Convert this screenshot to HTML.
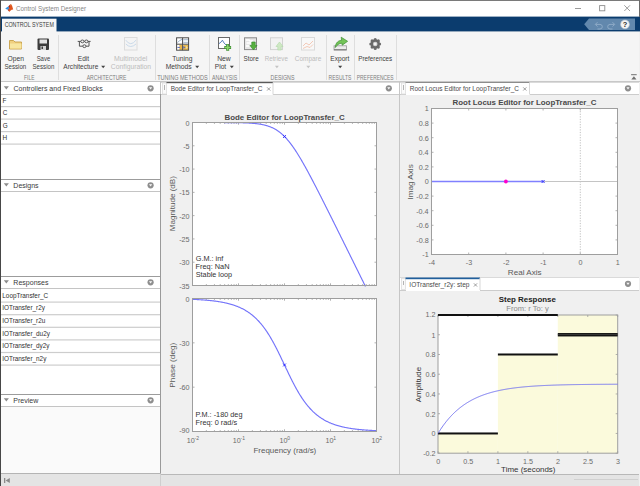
<!DOCTYPE html><html><head><meta charset="utf-8"><style>*{margin:0;padding:0}html,body{width:640px;height:486px;overflow:hidden;background:#f0f0f0}svg{position:absolute;left:0;top:0;display:block}</style></head><body><svg width="640" height="486" viewBox="0 0 640 486" style="font-family:'Liberation Sans', sans-serif"><rect x="0" y="0" width="640" height="486" fill="#f0f0f0" shape-rendering="crispEdges"/>
<rect x="0" y="0" width="640" height="17" fill="#ffffff" shape-rendering="crispEdges"/>
<rect x="0" y="0" width="640" height="1" fill="#7a7a7a" shape-rendering="crispEdges"/>
<rect x="0" y="16.6" width="640" height="14.8" fill="#0b3c6e"/>
<rect x="2" y="18.7" width="54.5" height="14" fill="#f5f5f5"/>
<text x="15.93" y="10.90" font-size="8.1" fill="#868686" textLength="70.06" lengthAdjust="spacingAndGlyphs">Control System Designer</text>
<text x="4.63" y="26.65" font-size="6.5" fill="#3c3c3c" textLength="49.20" lengthAdjust="spacingAndGlyphs">CONTROL SYSTEM</text>
<polygon points="584.2,24.3 589,18.6 635,18.6 635,29.9 589,29.9" fill="#6288ad"/>
<path d="M597.5,22.2 l-2.2,2.2 l2.2,2.2 M595.5,24.4 h4.5 a2.3,2.3 0 0 1 0,4.6 h-2.5" stroke="#8eabc8" stroke-width="1" fill="none"/>
<path d="M612.5,22.2 l2.2,2.2 l-2.2,2.2 M614.5,24.4 h-4.5 a2.3,2.3 0 0 0 0,4.6 h2.5" stroke="#8eabc8" stroke-width="1" fill="none"/>
<circle cx="625" cy="24.4" r="4.4" fill="#f4f4f4" stroke="#b8c4d0" stroke-width="0.6"/>
<text x="625" y="27.3" font-size="7.4" font-weight="bold" text-anchor="middle" fill="#2a2a2a">?</text>
<line x1="575" y1="8.5" x2="581" y2="8.5" stroke="#8e8e8e" stroke-width="0.9"/>
<rect x="599.6" y="5.6" width="5.2" height="5.2" fill="none" stroke="#8e8e8e" stroke-width="0.9"/>
<path d="M624.3,5.3 L630,11 M630,5.3 L624.3,11" stroke="#8e8e8e" stroke-width="0.85"/>
<polygon points="5.2,8.6 8.2,6.6 9.6,8.2 7.4,9.8" fill="#3590e0"/>
<polygon points="8.2,6.6 10.6,4.0 9.4,11.6 7.6,10.0 9.6,8.2" fill="#a8281a"/>
<polygon points="10.6,4.0 12,5.6 13.2,9.6 11.6,9.8 9.2,11.8 8.6,11" fill="#e0541c"/>
<polygon points="10.6,4.0 11.6,4.4 12,5.6" fill="#e8b040"/>
<rect x="1" y="32" width="638" height="49" fill="#f5f5f5" shape-rendering="crispEdges"/>
<rect x="0" y="81" width="640" height="1" fill="#c8c8c8" shape-rendering="crispEdges"/>
<rect x="58" y="35" width="1" height="45" fill="#dedede" shape-rendering="crispEdges"/>
<rect x="155" y="35" width="1" height="45" fill="#dedede" shape-rendering="crispEdges"/>
<rect x="209" y="35" width="1" height="45" fill="#dedede" shape-rendering="crispEdges"/>
<rect x="239" y="35" width="1" height="45" fill="#dedede" shape-rendering="crispEdges"/>
<rect x="326" y="35" width="1" height="45" fill="#dedede" shape-rendering="crispEdges"/>
<rect x="354" y="35" width="1" height="45" fill="#dedede" shape-rendering="crispEdges"/>
<rect x="396" y="35" width="1" height="45" fill="#dedede" shape-rendering="crispEdges"/>
<text x="7.45" y="60.80" font-size="7.3" fill="#3f3f3f" textLength="16.50" lengthAdjust="spacingAndGlyphs">Open</text>
<text x="4.42" y="69.40" font-size="7.3" fill="#3f3f3f" textLength="21.79" lengthAdjust="spacingAndGlyphs">Session</text>
<text x="36.63" y="60.80" font-size="7.3" fill="#3f3f3f" textLength="13.63" lengthAdjust="spacingAndGlyphs">Save</text>
<text x="32.52" y="69.40" font-size="7.3" fill="#3f3f3f" textLength="21.79" lengthAdjust="spacingAndGlyphs">Session</text>
<text x="24.11" y="79.60" font-size="6.5" fill="#7c7c7c" textLength="10.29" lengthAdjust="spacingAndGlyphs">FILE</text>
<text x="77.78" y="60.80" font-size="7.3" fill="#3f3f3f" textLength="11.28" lengthAdjust="spacingAndGlyphs">Edit</text>
<text x="63.30" y="69.40" font-size="7.3" fill="#3f3f3f" textLength="35.00" lengthAdjust="spacingAndGlyphs">Architecture</text>
<text x="113.95" y="60.80" font-size="7.3" fill="#bcbcbc" textLength="33.40" lengthAdjust="spacingAndGlyphs">Multimodel</text>
<text x="110.86" y="69.40" font-size="7.3" fill="#bcbcbc" textLength="40.20" lengthAdjust="spacingAndGlyphs">Configuration</text>
<text x="86.70" y="79.60" font-size="6.5" fill="#7c7c7c" textLength="39.72" lengthAdjust="spacingAndGlyphs">ARCHITECTURE</text>
<text x="172.17" y="60.80" font-size="7.3" fill="#3f3f3f" textLength="20.27" lengthAdjust="spacingAndGlyphs">Tuning</text>
<text x="165.66" y="69.40" font-size="7.3" fill="#3f3f3f" textLength="26.09" lengthAdjust="spacingAndGlyphs">Methods</text>
<text x="157.19" y="79.60" font-size="6.5" fill="#7c7c7c" textLength="50.57" lengthAdjust="spacingAndGlyphs">TUNING METHODS</text>
<text x="217.16" y="60.80" font-size="7.3" fill="#3f3f3f" textLength="13.61" lengthAdjust="spacingAndGlyphs">New</text>
<text x="214.77" y="69.40" font-size="7.3" fill="#3f3f3f" textLength="11.38" lengthAdjust="spacingAndGlyphs">Plot</text>
<text x="212.00" y="79.60" font-size="6.5" fill="#7c7c7c" textLength="25.15" lengthAdjust="spacingAndGlyphs">ANALYSIS</text>
<text x="243.62" y="60.80" font-size="7.3" fill="#3f3f3f" textLength="15.07" lengthAdjust="spacingAndGlyphs">Store</text>
<text x="264.70" y="60.80" font-size="7.3" fill="#bcbcbc" textLength="23.17" lengthAdjust="spacingAndGlyphs">Retrieve</text>
<text x="294.78" y="60.80" font-size="7.3" fill="#bcbcbc" textLength="26.53" lengthAdjust="spacingAndGlyphs">Compare</text>
<text x="270.58" y="79.60" font-size="6.5" fill="#7c7c7c" textLength="23.87" lengthAdjust="spacingAndGlyphs">DESIGNS</text>
<text x="330.37" y="60.80" font-size="7.3" fill="#3f3f3f" textLength="18.99" lengthAdjust="spacingAndGlyphs">Export</text>
<text x="328.60" y="79.60" font-size="6.5" fill="#7c7c7c" textLength="22.74" lengthAdjust="spacingAndGlyphs">RESULTS</text>
<text x="358.30" y="60.80" font-size="7.3" fill="#3f3f3f" textLength="33.94" lengthAdjust="spacingAndGlyphs">Preferences</text>
<text x="356.81" y="79.60" font-size="6.5" fill="#7c7c7c" textLength="36.82" lengthAdjust="spacingAndGlyphs">PREFERENCES</text>
<polygon points="101.2,65.8 105.2,65.8 103.2,68.3" fill="#444"/>
<polygon points="195.2,65.8 199.2,65.8 197.2,68.3" fill="#444"/>
<polygon points="229.8,65.8 233.8,65.8 231.8,68.3" fill="#444"/>
<polygon points="274.9,65.8 278.9,65.8 276.9,68.3" fill="#c4c4c4"/>
<polygon points="306.3,65.8 310.3,65.8 308.3,68.3" fill="#c4c4c4"/>
<polygon points="338.2,65.8 342.2,65.8 340.2,68.3" fill="#444"/>
<g><path d="M9.5,40.5 h4 l1.5,1.5 h6.5 v7 h-12 z" fill="#f0d080" stroke="#c8a048" stroke-width="0.9"/><path d="M10,43.5 h11.5 v5 h-11.5 z" fill="#f8e6a0"/><rect x="37.5" y="38.5" width="11.5" height="11.5" rx="1" fill="#3c3c3c"/><rect x="39.5" y="39.5" width="7.5" height="4" fill="#e4e4e4"/><rect x="40.5" y="46" width="5.5" height="4" fill="#d4d4d4"/><rect x="41.5" y="46.5" width="1.5" height="2.5" fill="#3c3c3c"/><g stroke="#555" stroke-width="1" fill="none"><path d="M77.7,41.4 H90.6 M79.4,41.4 V46.2 H89 V41.4"/><ellipse cx="82.4" cy="41.4" rx="1.6" ry="1.4" fill="#f5f5f5"/><ellipse cx="86.4" cy="41.4" rx="1.6" ry="1.4" fill="#f5f5f5"/><ellipse cx="84.4" cy="46.2" rx="1.6" ry="1.4" fill="#f5f5f5"/></g><rect x="124.5" y="37.5" width="12.5" height="12.5" fill="#f4f4f4" stroke="#dcdcdc"/><path d="M125.8,40.2 q4.8,7 10.2,0 M125.8,44 q4.8,5 10.2,0" stroke="#c4d6e8" fill="none" stroke-width="0.9"/><rect x="176.5" y="37.8" width="12.2" height="12.4" fill="#ffffff"/><path d="M177.6,42.6 q2,-2.6 4.4,-3.2" stroke="#8aa8c8" stroke-width="0.9" fill="none"/><rect x="183.4" y="39" width="4.6" height="1.3" fill="#b4c6d8"/><rect x="183.4" y="41.8" width="4.6" height="1.3" fill="#b4c6d8"/><rect x="179.4" y="44.8" width="2.8" height="5.2" fill="#e6b44a"/><rect x="183.2" y="44.8" width="5.2" height="5.2" fill="#e8b848"/><path d="M177.4,47.4 h2.6" stroke="#5a6ab8" stroke-width="1"/><polygon points="183.3,46 185.6,47.4 183.3,48.8" fill="#5a6ab8"/><polygon points="185.8,45.5 187.8,47.4 185.8,49.3" fill="#ffffff" opacity="0.5"/><rect x="176.6" y="37.8" width="12" height="12.4" fill="none" stroke="#4a4a4a" stroke-width="1"/><path d="M182.6,37.8 v12.4 M176.6,44.2 h12" stroke="#4a4a4a" stroke-width="1"/><rect x="218.5" y="37.5" width="11" height="11" fill="#ffffff" stroke="#6a6a6a"/><path d="M219,43.6 q2,-1 3.4,-3.4 q1.5,3.2 3.6,4.8 l2,0.4" stroke="#4a74b8" fill="none" stroke-width="0.9"/><path d="M224.3,47.4 h6.8 M227.7,44 v6.8" stroke="#3c8c34" stroke-width="3"/><path d="M224.9,47.4 h5.6 M227.7,44.6 v5.6" stroke="#8cd46c" stroke-width="1.5"/><rect x="244.5" y="37.8" width="12" height="11.8" fill="#e6e6e6" stroke="#8a8a8a"/><path d="M246,40 h3 l1,1 h3 M246,46 h3 M246.5,43 h5" stroke="#ffffff" stroke-width="1.3" fill="none"/><polygon points="251.8,42 255.2,42 255.2,45.5 257,45.5 253.5,50 250,45.5 251.8,45.5" fill="#58b040" stroke="#2e8a28" stroke-width="0.6"/><rect x="270.5" y="37.8" width="12" height="11.8" fill="#f2f2f2" stroke="#d2d2d2"/><polygon points="277.8,50 281.2,50 281.2,46.5 283,46.5 279.5,42 276,46.5 277.8,46.5" fill="#cfe8c4" stroke="#b0d8a8" stroke-width="0.6"/><rect x="301.5" y="37.5" width="13" height="12.5" fill="#f8f8f8" stroke="#dadada"/><path d="M303,46 l3,-3 l3,2 l4,-4 M303,48.5 l4,-2 l3,1 l3,-3" stroke="#f2c4b0" fill="none" stroke-width="0.9"/><rect x="334" y="45.8" width="12.5" height="4.2" fill="#ececec" stroke="#9a9a9a" stroke-width="0.8"/><rect x="334" y="49.2" width="12.5" height="1.1" fill="#7a7a7a"/><path d="M335.2,47.6 C335.6,42.2 338.8,40.4 341.6,40.3 L341.2,37.2 L347.6,41.3 L342.2,45.2 L341.9,43.2 C339.2,43.2 336.8,45.2 335.2,47.6 Z" fill="#74c458" stroke="#3e8e34" stroke-width="0.7"/><g transform="translate(375.2,44)"><circle r="4.6" fill="#6a6a6a"/><circle cx="4.40" cy="0.00" r="1.55" fill="#6a6a6a"/><circle cx="3.11" cy="3.11" r="1.55" fill="#6a6a6a"/><circle cx="0.00" cy="4.40" r="1.55" fill="#6a6a6a"/><circle cx="-3.11" cy="3.11" r="1.55" fill="#6a6a6a"/><circle cx="-4.40" cy="0.00" r="1.55" fill="#6a6a6a"/><circle cx="-3.11" cy="-3.11" r="1.55" fill="#6a6a6a"/><circle cx="-0.00" cy="-4.40" r="1.55" fill="#6a6a6a"/><circle cx="3.11" cy="-3.11" r="1.55" fill="#6a6a6a"/><circle r="2.3" fill="#d0d0d0"/><circle r="1.3" fill="#f4f4f4"/></g></g>
<rect x="631.1" y="74.2" width="5.6" height="1" fill="#707070"/><polygon points="631.3,79.6 636.5,79.6 633.9,76.2" fill="#707070"/>
<rect x="1" y="82" width="159" height="391" fill="#ffffff" shape-rendering="crispEdges"/>
<rect x="160" y="82" width="1" height="392" fill="#9a9a9a" shape-rendering="crispEdges"/>
<rect x="160" y="82" width="1" height="12" fill="#c4c4c4" shape-rendering="crispEdges"/>
<rect x="1" y="94" width="159" height="1" fill="#c4c4c4" shape-rendering="crispEdges"/>
<polygon points="3.8,86.2 8.9,86.2 6.35,89.5" fill="#8c8c8c"/>
<text x="13.55" y="90.90" font-size="8.1" fill="#3a3a3a" textLength="89.18" lengthAdjust="spacingAndGlyphs">Controllers and Fixed Blocks</text>
<circle cx="150.6" cy="88.3" r="3.1" fill="#8e8e8e"/><polygon points="149.0,87.3 152.2,87.3 150.6,89.6" fill="#f8f8f8"/>
<text x="2.49" y="102.80" font-size="7.1" fill="#303030" textLength="3.90" lengthAdjust="spacingAndGlyphs">F</text>
<rect x="1" y="106.0" width="159" height="1.2" fill="#cdcdcd"/>
<text x="2.68" y="115.30" font-size="7.1" fill="#303030" textLength="4.61" lengthAdjust="spacingAndGlyphs">C</text>
<rect x="1" y="118.5" width="159" height="1.2" fill="#cdcdcd"/>
<text x="2.68" y="127.80" font-size="7.1" fill="#303030" textLength="4.97" lengthAdjust="spacingAndGlyphs">G</text>
<rect x="1" y="131.0" width="159" height="1.2" fill="#cdcdcd"/>
<text x="2.49" y="140.30" font-size="7.1" fill="#303030" textLength="4.61" lengthAdjust="spacingAndGlyphs">H</text>
<rect x="1" y="143.5" width="159" height="1.2" fill="#cdcdcd"/>
<rect x="1" y="179" width="159" height="1" fill="#9c9c9c" shape-rendering="crispEdges"/>
<rect x="1" y="191" width="159" height="1" fill="#c4c4c4" shape-rendering="crispEdges"/>
<polygon points="3.8,183.3 8.9,183.3 6.35,186.6" fill="#8c8c8c"/>
<text x="13.34" y="187.90" font-size="8.1" fill="#3a3a3a" textLength="25.29" lengthAdjust="spacingAndGlyphs">Designs</text>
<circle cx="150.6" cy="185.3" r="3.1" fill="#8e8e8e"/><polygon points="149.0,184.3 152.2,184.3 150.6,186.60000000000002" fill="#f8f8f8"/>
<rect x="1" y="276" width="159" height="1" fill="#9c9c9c" shape-rendering="crispEdges"/>
<rect x="1" y="288" width="159" height="1" fill="#c4c4c4" shape-rendering="crispEdges"/>
<polygon points="3.8,280.3 8.9,280.3 6.35,283.6" fill="#8c8c8c"/>
<text x="13.34" y="284.90" font-size="8.1" fill="#3a3a3a" textLength="35.20" lengthAdjust="spacingAndGlyphs">Responses</text>
<circle cx="150.6" cy="282.3" r="3.1" fill="#8e8e8e"/><polygon points="149.0,281.3 152.2,281.3 150.6,283.6" fill="#f8f8f8"/>
<text x="2.29" y="297.70" font-size="7.1" fill="#303030" textLength="45.94" lengthAdjust="spacingAndGlyphs">LoopTransfer_C</text>
<rect x="1" y="301.5" width="159" height="1.2" fill="#cdcdcd"/>
<text x="2.22" y="310.30" font-size="7.1" fill="#303030" textLength="42.73" lengthAdjust="spacingAndGlyphs">IOTransfer_r2y</text>
<rect x="1" y="314.1" width="159" height="1.2" fill="#cdcdcd"/>
<text x="2.22" y="322.90" font-size="7.1" fill="#303030" textLength="43.09" lengthAdjust="spacingAndGlyphs">IOTransfer_r2u</text>
<rect x="1" y="326.7" width="159" height="1.2" fill="#cdcdcd"/>
<text x="2.22" y="335.50" font-size="7.1" fill="#303030" textLength="47.71" lengthAdjust="spacingAndGlyphs">IOTransfer_du2y</text>
<rect x="1" y="339.3" width="159" height="1.2" fill="#cdcdcd"/>
<text x="2.22" y="348.10" font-size="7.1" fill="#303030" textLength="47.35" lengthAdjust="spacingAndGlyphs">IOTransfer_dy2y</text>
<rect x="1" y="351.9" width="159" height="1.2" fill="#cdcdcd"/>
<text x="2.22" y="360.70" font-size="7.1" fill="#303030" textLength="44.16" lengthAdjust="spacingAndGlyphs">IOTransfer_n2y</text>
<rect x="1" y="364.5" width="159" height="1.2" fill="#cdcdcd"/>
<rect x="1" y="394" width="159" height="1" fill="#9c9c9c" shape-rendering="crispEdges"/>
<rect x="1" y="406" width="159" height="1" fill="#c4c4c4" shape-rendering="crispEdges"/>
<polygon points="3.8,398.3 8.9,398.3 6.35,401.6" fill="#8c8c8c"/>
<text x="13.34" y="402.90" font-size="8.1" fill="#3a3a3a" textLength="25.04" lengthAdjust="spacingAndGlyphs">Preview</text>
<circle cx="150.6" cy="400.3" r="3.1" fill="#8e8e8e"/><polygon points="149.0,399.3 152.2,399.3 150.6,401.6" fill="#f8f8f8"/>
<rect x="1" y="407" width="159" height="66" fill="#fafafa" shape-rendering="crispEdges"/>
<rect x="0" y="0" width="1" height="486" fill="#474747" shape-rendering="crispEdges"/>
<rect x="639" y="0" width="1" height="17" fill="#6b6b6b" shape-rendering="crispEdges"/>
<rect x="1" y="473" width="160" height="1" fill="#b4b4b4" shape-rendering="crispEdges"/>
<rect x="161" y="474" width="478" height="1" fill="#b8b8b8" shape-rendering="crispEdges"/>
<rect x="1" y="474" width="160" height="12" fill="#e4e4e4" shape-rendering="crispEdges"/>
<rect x="161" y="475" width="478" height="11" fill="#e4e4e4" shape-rendering="crispEdges"/>
<rect x="160" y="474" width="1" height="12" fill="#cfcfcf" shape-rendering="crispEdges"/>
<rect x="4" y="478" width="1.3" height="5" fill="#8a8a8a"/><polygon points="5.6,480.5 9.8,478 9.8,483" fill="#8a8a8a"/>
<rect x="574" y="479" width="64" height="1" fill="#d0d0d0" shape-rendering="crispEdges"/>
<rect x="161" y="82" width="238" height="392" fill="#f0f0f0" shape-rendering="crispEdges"/>
<rect x="399" y="82" width="1" height="392" fill="#c6c6c6" shape-rendering="crispEdges"/>
<rect x="400" y="82" width="239" height="392" fill="#f0f0f0" shape-rendering="crispEdges"/>
<rect x="161" y="82" width="238" height="12.5" fill="#ffffff" shape-rendering="crispEdges"/>
<rect x="161" y="94" width="238" height="1" fill="#cccccc" shape-rendering="crispEdges"/>
<rect x="161" y="81.5" width="238" height="1" fill="#dadada" shape-rendering="crispEdges"/>
<rect x="162" y="82.5" width="4.5" height="11.5" fill="#fafafa" shape-rendering="crispEdges"/>
<rect x="162.5" y="83" width="4" height="11" fill="none" stroke="#dedede" stroke-width="0.8"/>
<rect x="163.8" y="85.3" width="1" height="4.6" fill="#b4b4b4" shape-rendering="crispEdges"/>
<rect x="166.5" y="94" width="106.5" height="1" fill="#ffffff" shape-rendering="crispEdges"/>
<rect x="166.5" y="82" width="106.5" height="1.2" fill="#5a5a5a"/>
<rect x="272.5" y="82.5" width="1" height="12" fill="#d8d8d8"/>
<text x="170.68" y="91.25" font-size="7.1" fill="#4a4a4a" textLength="91.76" lengthAdjust="spacingAndGlyphs">Bode Editor for LoopTransfer_C</text>
<path d="M267.09999999999997,87.35 l3.2,3.2 M270.3,87.35 l-3.2,3.2" stroke="#858585" stroke-width="0.8"/>
<circle cx="388.8" cy="88.3" r="3.1" fill="#8e8e8e"/><polygon points="387.2,87.3 390.40000000000003,87.3 388.8,89.6" fill="#f8f8f8"/>
<rect x="400" y="82" width="239" height="12.5" fill="#ffffff" shape-rendering="crispEdges"/>
<rect x="400" y="94" width="239" height="1" fill="#cccccc" shape-rendering="crispEdges"/>
<rect x="400" y="81.5" width="239" height="1" fill="#dadada" shape-rendering="crispEdges"/>
<rect x="401" y="82.5" width="4.5" height="11.5" fill="#fafafa" shape-rendering="crispEdges"/>
<rect x="401.5" y="83" width="4" height="11" fill="none" stroke="#dedede" stroke-width="0.8"/>
<rect x="402.8" y="85.3" width="1" height="4.6" fill="#b4b4b4" shape-rendering="crispEdges"/>
<rect x="405.5" y="94" width="124.0" height="1" fill="#ffffff" shape-rendering="crispEdges"/>
<rect x="405.5" y="82" width="124.0" height="1.0" fill="#8c8c8c"/>
<rect x="529.0" y="82.5" width="1" height="12" fill="#d8d8d8"/>
<text x="409.78" y="91.25" font-size="7.1" fill="#4a4a4a" textLength="109.15" lengthAdjust="spacingAndGlyphs">Root Locus Editor for LoopTransfer_C</text>
<path d="M523.1999999999999,87.35 l3.2,3.2 M526.4,87.35 l-3.2,3.2" stroke="#858585" stroke-width="0.8"/>
<circle cx="628" cy="88.3" r="3.1" fill="#8e8e8e"/><polygon points="626.4,87.3 629.6,87.3 628,89.6" fill="#f8f8f8"/>
<rect x="400" y="276.5" width="239" height="1" fill="#cfcfcf" shape-rendering="crispEdges"/>
<rect x="400" y="277.5" width="239" height="12.5" fill="#ffffff" shape-rendering="crispEdges"/>
<rect x="400" y="289.5" width="239" height="1" fill="#cccccc" shape-rendering="crispEdges"/>
<rect x="400" y="277.0" width="239" height="1" fill="#dadada" shape-rendering="crispEdges"/>
<rect x="401" y="278.0" width="4.5" height="11.5" fill="#fafafa" shape-rendering="crispEdges"/>
<rect x="401.5" y="278.5" width="4" height="11" fill="none" stroke="#dedede" stroke-width="0.8"/>
<rect x="402.8" y="280.8" width="1" height="4.6" fill="#b4b4b4" shape-rendering="crispEdges"/>
<rect x="405.5" y="289.5" width="74.5" height="1" fill="#ffffff" shape-rendering="crispEdges"/>
<rect x="405.5" y="277.5" width="74.5" height="1.7" fill="#215f9c"/>
<rect x="479.5" y="278.0" width="1" height="12" fill="#d8d8d8"/>
<text x="409.31" y="287.25" font-size="7.1" fill="#4a4a4a" textLength="60.23" lengthAdjust="spacingAndGlyphs">IOTransfer_r2y: step</text>
<path d="M473.9,283.35 l3.2,3.2 M477.1,283.35 l-3.2,3.2" stroke="#858585" stroke-width="0.8"/>
<circle cx="628" cy="283.8" r="3.1" fill="#8e8e8e"/><polygon points="626.4,282.8 629.6,282.8 628,285.1" fill="#f8f8f8"/>
<rect x="192.5" y="122.5" width="184.0" height="163.0" fill="#ffffff"/>
<rect x="192.5" y="298.5" width="184.0" height="133.0" fill="#ffffff"/>
<path d="M192.50,122.5 v2.2 M192.50,285.5 v-2.2" stroke="#9e9e9e" stroke-width="0.8"/>
<path d="M192.50,298.5 v2.2 M192.50,431.5 v-2.2" stroke="#9e9e9e" stroke-width="0.8"/>
<path d="M206.35,122.5 v1.4 M206.35,285.5 v-1.4" stroke="#9e9e9e" stroke-width="0.8"/>
<path d="M206.35,298.5 v1.4 M206.35,431.5 v-1.4" stroke="#9e9e9e" stroke-width="0.8"/>
<path d="M214.45,122.5 v1.4 M214.45,285.5 v-1.4" stroke="#9e9e9e" stroke-width="0.8"/>
<path d="M214.45,298.5 v1.4 M214.45,431.5 v-1.4" stroke="#9e9e9e" stroke-width="0.8"/>
<path d="M220.19,122.5 v1.4 M220.19,285.5 v-1.4" stroke="#9e9e9e" stroke-width="0.8"/>
<path d="M220.19,298.5 v1.4 M220.19,431.5 v-1.4" stroke="#9e9e9e" stroke-width="0.8"/>
<path d="M224.65,122.5 v1.4 M224.65,285.5 v-1.4" stroke="#9e9e9e" stroke-width="0.8"/>
<path d="M224.65,298.5 v1.4 M224.65,431.5 v-1.4" stroke="#9e9e9e" stroke-width="0.8"/>
<path d="M228.29,122.5 v1.4 M228.29,285.5 v-1.4" stroke="#9e9e9e" stroke-width="0.8"/>
<path d="M228.29,298.5 v1.4 M228.29,431.5 v-1.4" stroke="#9e9e9e" stroke-width="0.8"/>
<path d="M231.37,122.5 v1.4 M231.37,285.5 v-1.4" stroke="#9e9e9e" stroke-width="0.8"/>
<path d="M231.37,298.5 v1.4 M231.37,431.5 v-1.4" stroke="#9e9e9e" stroke-width="0.8"/>
<path d="M234.04,122.5 v1.4 M234.04,285.5 v-1.4" stroke="#9e9e9e" stroke-width="0.8"/>
<path d="M234.04,298.5 v1.4 M234.04,431.5 v-1.4" stroke="#9e9e9e" stroke-width="0.8"/>
<path d="M236.40,122.5 v1.4 M236.40,285.5 v-1.4" stroke="#9e9e9e" stroke-width="0.8"/>
<path d="M236.40,298.5 v1.4 M236.40,431.5 v-1.4" stroke="#9e9e9e" stroke-width="0.8"/>
<path d="M238.50,122.5 v2.2 M238.50,285.5 v-2.2" stroke="#9e9e9e" stroke-width="0.8"/>
<path d="M238.50,298.5 v2.2 M238.50,431.5 v-2.2" stroke="#9e9e9e" stroke-width="0.8"/>
<path d="M252.35,122.5 v1.4 M252.35,285.5 v-1.4" stroke="#9e9e9e" stroke-width="0.8"/>
<path d="M252.35,298.5 v1.4 M252.35,431.5 v-1.4" stroke="#9e9e9e" stroke-width="0.8"/>
<path d="M260.45,122.5 v1.4 M260.45,285.5 v-1.4" stroke="#9e9e9e" stroke-width="0.8"/>
<path d="M260.45,298.5 v1.4 M260.45,431.5 v-1.4" stroke="#9e9e9e" stroke-width="0.8"/>
<path d="M266.19,122.5 v1.4 M266.19,285.5 v-1.4" stroke="#9e9e9e" stroke-width="0.8"/>
<path d="M266.19,298.5 v1.4 M266.19,431.5 v-1.4" stroke="#9e9e9e" stroke-width="0.8"/>
<path d="M270.65,122.5 v1.4 M270.65,285.5 v-1.4" stroke="#9e9e9e" stroke-width="0.8"/>
<path d="M270.65,298.5 v1.4 M270.65,431.5 v-1.4" stroke="#9e9e9e" stroke-width="0.8"/>
<path d="M274.29,122.5 v1.4 M274.29,285.5 v-1.4" stroke="#9e9e9e" stroke-width="0.8"/>
<path d="M274.29,298.5 v1.4 M274.29,431.5 v-1.4" stroke="#9e9e9e" stroke-width="0.8"/>
<path d="M277.37,122.5 v1.4 M277.37,285.5 v-1.4" stroke="#9e9e9e" stroke-width="0.8"/>
<path d="M277.37,298.5 v1.4 M277.37,431.5 v-1.4" stroke="#9e9e9e" stroke-width="0.8"/>
<path d="M280.04,122.5 v1.4 M280.04,285.5 v-1.4" stroke="#9e9e9e" stroke-width="0.8"/>
<path d="M280.04,298.5 v1.4 M280.04,431.5 v-1.4" stroke="#9e9e9e" stroke-width="0.8"/>
<path d="M282.40,122.5 v1.4 M282.40,285.5 v-1.4" stroke="#9e9e9e" stroke-width="0.8"/>
<path d="M282.40,298.5 v1.4 M282.40,431.5 v-1.4" stroke="#9e9e9e" stroke-width="0.8"/>
<path d="M284.50,122.5 v2.2 M284.50,285.5 v-2.2" stroke="#9e9e9e" stroke-width="0.8"/>
<path d="M284.50,298.5 v2.2 M284.50,431.5 v-2.2" stroke="#9e9e9e" stroke-width="0.8"/>
<path d="M298.35,122.5 v1.4 M298.35,285.5 v-1.4" stroke="#9e9e9e" stroke-width="0.8"/>
<path d="M298.35,298.5 v1.4 M298.35,431.5 v-1.4" stroke="#9e9e9e" stroke-width="0.8"/>
<path d="M306.45,122.5 v1.4 M306.45,285.5 v-1.4" stroke="#9e9e9e" stroke-width="0.8"/>
<path d="M306.45,298.5 v1.4 M306.45,431.5 v-1.4" stroke="#9e9e9e" stroke-width="0.8"/>
<path d="M312.19,122.5 v1.4 M312.19,285.5 v-1.4" stroke="#9e9e9e" stroke-width="0.8"/>
<path d="M312.19,298.5 v1.4 M312.19,431.5 v-1.4" stroke="#9e9e9e" stroke-width="0.8"/>
<path d="M316.65,122.5 v1.4 M316.65,285.5 v-1.4" stroke="#9e9e9e" stroke-width="0.8"/>
<path d="M316.65,298.5 v1.4 M316.65,431.5 v-1.4" stroke="#9e9e9e" stroke-width="0.8"/>
<path d="M320.29,122.5 v1.4 M320.29,285.5 v-1.4" stroke="#9e9e9e" stroke-width="0.8"/>
<path d="M320.29,298.5 v1.4 M320.29,431.5 v-1.4" stroke="#9e9e9e" stroke-width="0.8"/>
<path d="M323.37,122.5 v1.4 M323.37,285.5 v-1.4" stroke="#9e9e9e" stroke-width="0.8"/>
<path d="M323.37,298.5 v1.4 M323.37,431.5 v-1.4" stroke="#9e9e9e" stroke-width="0.8"/>
<path d="M326.04,122.5 v1.4 M326.04,285.5 v-1.4" stroke="#9e9e9e" stroke-width="0.8"/>
<path d="M326.04,298.5 v1.4 M326.04,431.5 v-1.4" stroke="#9e9e9e" stroke-width="0.8"/>
<path d="M328.40,122.5 v1.4 M328.40,285.5 v-1.4" stroke="#9e9e9e" stroke-width="0.8"/>
<path d="M328.40,298.5 v1.4 M328.40,431.5 v-1.4" stroke="#9e9e9e" stroke-width="0.8"/>
<path d="M330.50,122.5 v2.2 M330.50,285.5 v-2.2" stroke="#9e9e9e" stroke-width="0.8"/>
<path d="M330.50,298.5 v2.2 M330.50,431.5 v-2.2" stroke="#9e9e9e" stroke-width="0.8"/>
<path d="M344.35,122.5 v1.4 M344.35,285.5 v-1.4" stroke="#9e9e9e" stroke-width="0.8"/>
<path d="M344.35,298.5 v1.4 M344.35,431.5 v-1.4" stroke="#9e9e9e" stroke-width="0.8"/>
<path d="M352.45,122.5 v1.4 M352.45,285.5 v-1.4" stroke="#9e9e9e" stroke-width="0.8"/>
<path d="M352.45,298.5 v1.4 M352.45,431.5 v-1.4" stroke="#9e9e9e" stroke-width="0.8"/>
<path d="M358.19,122.5 v1.4 M358.19,285.5 v-1.4" stroke="#9e9e9e" stroke-width="0.8"/>
<path d="M358.19,298.5 v1.4 M358.19,431.5 v-1.4" stroke="#9e9e9e" stroke-width="0.8"/>
<path d="M362.65,122.5 v1.4 M362.65,285.5 v-1.4" stroke="#9e9e9e" stroke-width="0.8"/>
<path d="M362.65,298.5 v1.4 M362.65,431.5 v-1.4" stroke="#9e9e9e" stroke-width="0.8"/>
<path d="M366.29,122.5 v1.4 M366.29,285.5 v-1.4" stroke="#9e9e9e" stroke-width="0.8"/>
<path d="M366.29,298.5 v1.4 M366.29,431.5 v-1.4" stroke="#9e9e9e" stroke-width="0.8"/>
<path d="M369.37,122.5 v1.4 M369.37,285.5 v-1.4" stroke="#9e9e9e" stroke-width="0.8"/>
<path d="M369.37,298.5 v1.4 M369.37,431.5 v-1.4" stroke="#9e9e9e" stroke-width="0.8"/>
<path d="M372.04,122.5 v1.4 M372.04,285.5 v-1.4" stroke="#9e9e9e" stroke-width="0.8"/>
<path d="M372.04,298.5 v1.4 M372.04,431.5 v-1.4" stroke="#9e9e9e" stroke-width="0.8"/>
<path d="M374.40,122.5 v1.4 M374.40,285.5 v-1.4" stroke="#9e9e9e" stroke-width="0.8"/>
<path d="M374.40,298.5 v1.4 M374.40,431.5 v-1.4" stroke="#9e9e9e" stroke-width="0.8"/>
<path d="M192.5,122.50 h2 M376.5,122.50 h-2" stroke="#9e9e9e" stroke-width="0.8"/>
<text x="185.56" y="125.50" font-size="7.2" fill="#6a6a6a" textLength="4.00" lengthAdjust="spacingAndGlyphs">0</text>
<path d="M192.5,145.79 h2 M376.5,145.79 h-2" stroke="#9e9e9e" stroke-width="0.8"/>
<text x="183.18" y="148.79" font-size="7.2" fill="#6a6a6a" textLength="6.40" lengthAdjust="spacingAndGlyphs">-5</text>
<path d="M192.5,169.07 h2 M376.5,169.07 h-2" stroke="#9e9e9e" stroke-width="0.8"/>
<text x="179.15" y="172.07" font-size="7.2" fill="#6a6a6a" textLength="10.41" lengthAdjust="spacingAndGlyphs">-10</text>
<path d="M192.5,192.36 h2 M376.5,192.36 h-2" stroke="#9e9e9e" stroke-width="0.8"/>
<text x="179.18" y="195.36" font-size="7.2" fill="#6a6a6a" textLength="10.41" lengthAdjust="spacingAndGlyphs">-15</text>
<path d="M192.5,215.64 h2 M376.5,215.64 h-2" stroke="#9e9e9e" stroke-width="0.8"/>
<text x="179.15" y="218.64" font-size="7.2" fill="#6a6a6a" textLength="10.41" lengthAdjust="spacingAndGlyphs">-20</text>
<path d="M192.5,238.93 h2 M376.5,238.93 h-2" stroke="#9e9e9e" stroke-width="0.8"/>
<text x="179.18" y="241.93" font-size="7.2" fill="#6a6a6a" textLength="10.41" lengthAdjust="spacingAndGlyphs">-25</text>
<path d="M192.5,262.21 h2 M376.5,262.21 h-2" stroke="#9e9e9e" stroke-width="0.8"/>
<text x="179.15" y="265.21" font-size="7.2" fill="#6a6a6a" textLength="10.41" lengthAdjust="spacingAndGlyphs">-30</text>
<path d="M192.5,285.50 h2 M376.5,285.50 h-2" stroke="#9e9e9e" stroke-width="0.8"/>
<text x="179.18" y="288.50" font-size="7.2" fill="#6a6a6a" textLength="10.41" lengthAdjust="spacingAndGlyphs">-35</text>
<path d="M192.5,298.50 h2 M376.5,298.50 h-2" stroke="#9e9e9e" stroke-width="0.8"/>
<text x="185.56" y="301.50" font-size="7.2" fill="#6a6a6a" textLength="4.00" lengthAdjust="spacingAndGlyphs">0</text>
<path d="M192.5,342.83 h2 M376.5,342.83 h-2" stroke="#9e9e9e" stroke-width="0.8"/>
<text x="179.15" y="345.83" font-size="7.2" fill="#6a6a6a" textLength="10.41" lengthAdjust="spacingAndGlyphs">-30</text>
<path d="M192.5,387.17 h2 M376.5,387.17 h-2" stroke="#9e9e9e" stroke-width="0.8"/>
<text x="179.15" y="390.17" font-size="7.2" fill="#6a6a6a" textLength="10.41" lengthAdjust="spacingAndGlyphs">-60</text>
<path d="M192.5,431.50 h2 M376.5,431.50 h-2" stroke="#9e9e9e" stroke-width="0.8"/>
<text x="179.15" y="433.00" font-size="7.2" fill="#6a6a6a" textLength="10.41" lengthAdjust="spacingAndGlyphs">-90</text>
<text x="186.72" y="442.75" font-size="7.2" fill="#6a6a6a" textLength="8.01" lengthAdjust="spacingAndGlyphs">10</text>
<text x="194.54" y="440.30" font-size="5.0" fill="#6a6a6a" textLength="4.45" lengthAdjust="spacingAndGlyphs">-2</text>
<text x="232.71" y="442.75" font-size="7.2" fill="#6a6a6a" textLength="8.01" lengthAdjust="spacingAndGlyphs">10</text>
<text x="240.53" y="440.30" font-size="5.0" fill="#6a6a6a" textLength="4.45" lengthAdjust="spacingAndGlyphs">-1</text>
<text x="279.51" y="442.75" font-size="7.2" fill="#6a6a6a" textLength="8.01" lengthAdjust="spacingAndGlyphs">10</text>
<text x="287.35" y="440.30" font-size="5.0" fill="#6a6a6a" textLength="2.78" lengthAdjust="spacingAndGlyphs">0</text>
<text x="325.62" y="442.75" font-size="7.2" fill="#6a6a6a" textLength="8.01" lengthAdjust="spacingAndGlyphs">10</text>
<text x="333.29" y="440.30" font-size="5.0" fill="#6a6a6a" textLength="2.78" lengthAdjust="spacingAndGlyphs">1</text>
<text x="371.57" y="442.75" font-size="7.2" fill="#6a6a6a" textLength="8.01" lengthAdjust="spacingAndGlyphs">10</text>
<text x="379.36" y="440.30" font-size="5.0" fill="#6a6a6a" textLength="2.78" lengthAdjust="spacingAndGlyphs">2</text>
<text x="253.46" y="452.90" font-size="8.0" fill="#5a5a5a" textLength="62.83" lengthAdjust="spacingAndGlyphs">Frequency (rad/s)</text>
<text transform="translate(175.00,230.70) rotate(-90)" x="-0.65" y="0" font-size="8.0" fill="#5a5a5a" textLength="55.25" lengthAdjust="spacingAndGlyphs">Magnitude (dB)</text>
<text transform="translate(174.90,387.00) rotate(-90)" x="-0.66" y="0" font-size="8.0" fill="#5a5a5a" textLength="44.98" lengthAdjust="spacingAndGlyphs">Phase (deg)</text>
<text x="224.49" y="119.80" font-size="7.9" fill="#4a4a4a" font-weight="bold" textLength="120.14" lengthAdjust="spacingAndGlyphs">Bode Editor for LoopTransfer_C</text>
<polyline points="192.50,122.50 192.96,122.50 193.42,122.50 193.88,122.50 194.34,122.50 194.80,122.50 195.26,122.50 195.72,122.50 196.18,122.50 196.64,122.50 197.10,122.50 197.56,122.50 198.02,122.50 198.48,122.50 198.94,122.50 199.40,122.50 199.86,122.50 200.32,122.50 200.78,122.50 201.24,122.50 201.70,122.51 202.16,122.51 202.62,122.51 203.08,122.51 203.54,122.51 204.00,122.51 204.46,122.51 204.92,122.51 205.38,122.51 205.84,122.51 206.30,122.51 206.76,122.51 207.22,122.51 207.68,122.51 208.14,122.51 208.60,122.51 209.06,122.51 209.52,122.51 209.98,122.51 210.44,122.51 210.90,122.51 211.36,122.51 211.82,122.51 212.28,122.51 212.74,122.52 213.20,122.52 213.66,122.52 214.12,122.52 214.58,122.52 215.04,122.52 215.50,122.52 215.96,122.52 216.42,122.52 216.88,122.52 217.34,122.52 217.80,122.53 218.26,122.53 218.72,122.53 219.18,122.53 219.64,122.53 220.10,122.53 220.56,122.53 221.02,122.54 221.48,122.54 221.94,122.54 222.40,122.54 222.86,122.54 223.32,122.54 223.78,122.55 224.24,122.55 224.70,122.55 225.16,122.55 225.62,122.56 226.08,122.56 226.54,122.56 227.00,122.56 227.46,122.57 227.92,122.57 228.38,122.57 228.84,122.58 229.30,122.58 229.76,122.58 230.22,122.59 230.68,122.59 231.14,122.60 231.60,122.60 232.06,122.61 232.52,122.61 232.98,122.62 233.44,122.62 233.90,122.63 234.36,122.63 234.82,122.64 235.28,122.65 235.74,122.65 236.20,122.66 236.66,122.67 237.12,122.68 237.58,122.68 238.04,122.69 238.50,122.70 238.96,122.71 239.42,122.72 239.88,122.73 240.34,122.74 240.80,122.75 241.26,122.76 241.72,122.78 242.18,122.79 242.64,122.80 243.10,122.82 243.56,122.83 244.02,122.85 244.48,122.86 244.94,122.88 245.40,122.90 245.86,122.92 246.32,122.94 246.78,122.96 247.24,122.98 247.70,123.00 248.16,123.03 248.62,123.05 249.08,123.08 249.54,123.10 250.00,123.13 250.46,123.16 250.92,123.19 251.38,123.22 251.84,123.25 252.30,123.29 252.76,123.33 253.22,123.36 253.68,123.40 254.14,123.45 254.60,123.49 255.06,123.53 255.52,123.58 255.98,123.63 256.44,123.68 256.90,123.74 257.36,123.79 257.82,123.85 258.28,123.91 258.74,123.98 259.20,124.05 259.66,124.12 260.12,124.19 260.58,124.27 261.04,124.34 261.50,124.43 261.96,124.51 262.42,124.60 262.88,124.70 263.34,124.80 263.80,124.90 264.26,125.00 264.72,125.12 265.18,125.23 265.64,125.35 266.10,125.48 266.56,125.61 267.02,125.74 267.48,125.88 267.94,126.03 268.40,126.18 268.86,126.34 269.32,126.50 269.78,126.67 270.24,126.85 270.70,127.03 271.16,127.22 271.62,127.42 272.08,127.63 272.54,127.84 273.00,128.06 273.46,128.29 273.92,128.52 274.38,128.76 274.84,129.02 275.30,129.28 275.76,129.55 276.22,129.83 276.68,130.11 277.14,130.41 277.60,130.72 278.06,131.03 278.52,131.36 278.98,131.69 279.44,132.04 279.90,132.39 280.36,132.76 280.82,133.13 281.28,133.52 281.74,133.92 282.20,134.32 282.66,134.74 283.12,135.17 283.58,135.61 284.04,136.06 284.50,136.52 284.96,136.99 285.42,137.47 285.88,137.96 286.34,138.47 286.80,138.98 287.26,139.51 287.72,140.04 288.18,140.59 288.64,141.14 289.10,141.71 289.56,142.28 290.02,142.87 290.48,143.47 290.94,144.07 291.40,144.69 291.86,145.31 292.32,145.95 292.78,146.59 293.24,147.24 293.70,147.91 294.16,148.58 294.62,149.26 295.08,149.94 295.54,150.64 296.00,151.34 296.46,152.05 296.92,152.77 297.38,153.50 297.84,154.23 298.30,154.98 298.76,155.72 299.22,156.48 299.68,157.24 300.14,158.01 300.60,158.78 301.06,159.56 301.52,160.34 301.98,161.14 302.44,161.93 302.90,162.73 303.36,163.54 303.82,164.35 304.28,165.17 304.74,165.99 305.20,166.81 305.66,167.64 306.12,168.48 306.58,169.31 307.04,170.15 307.50,171.00 307.96,171.85 308.42,172.70 308.88,173.55 309.34,174.41 309.80,175.27 310.26,176.14 310.72,177.01 311.18,177.88 311.64,178.75 312.10,179.62 312.56,180.50 313.02,181.38 313.48,182.26 313.94,183.15 314.40,184.03 314.86,184.92 315.32,185.81 315.78,186.70 316.24,187.59 316.70,188.49 317.16,189.39 317.62,190.28 318.08,191.18 318.54,192.08 319.00,192.99 319.46,193.89 319.92,194.80 320.38,195.70 320.84,196.61 321.30,197.52 321.76,198.43 322.22,199.34 322.68,200.25 323.14,201.16 323.60,202.07 324.06,202.98 324.52,203.90 324.98,204.81 325.44,205.73 325.90,206.65 326.36,207.56 326.82,208.48 327.28,209.40 327.74,210.32 328.20,211.24 328.66,212.16 329.12,213.08 329.58,214.00 330.04,214.92 330.50,215.84 330.96,216.77 331.42,217.69 331.88,218.61 332.34,219.54 332.80,220.46 333.26,221.38 333.72,222.31 334.18,223.23 334.64,224.16 335.10,225.08 335.56,226.01 336.02,226.94 336.48,227.86 336.94,228.79 337.40,229.72 337.86,230.64 338.32,231.57 338.78,232.50 339.24,233.42 339.70,234.35 340.16,235.28 340.62,236.21 341.08,237.14 341.54,238.06 342.00,238.99 342.46,239.92 342.92,240.85 343.38,241.78 343.84,242.71 344.30,243.64 344.76,244.57 345.22,245.49 345.68,246.42 346.14,247.35 346.60,248.28 347.06,249.21 347.52,250.14 347.98,251.07 348.44,252.00 348.90,252.93 349.36,253.86 349.82,254.79 350.28,255.72 350.74,256.65 351.20,257.58 351.66,258.51 352.12,259.44 352.58,260.37 353.04,261.30 353.50,262.23 353.96,263.17 354.42,264.10 354.88,265.03 355.34,265.96 355.80,266.89 356.26,267.82 356.72,268.75 357.18,269.68 357.64,270.61 358.10,271.54 358.56,272.47 359.02,273.40 359.48,274.33 359.94,275.26 360.40,276.20 360.86,277.13 361.32,278.06 361.78,278.99 362.24,279.92 362.70,280.85 363.16,281.78 363.62,282.71 364.08,283.64 364.54,284.58 365.00,285.51 365.46,286.44" fill="none" stroke="#7474fa" stroke-width="1.15"/>
<polyline points="192.50,299.35 192.96,299.37 193.42,299.39 193.88,299.41 194.34,299.43 194.80,299.45 195.26,299.47 195.72,299.49 196.18,299.52 196.64,299.54 197.10,299.57 197.56,299.59 198.02,299.62 198.48,299.64 198.94,299.67 199.40,299.70 199.86,299.72 200.32,299.75 200.78,299.78 201.24,299.81 201.70,299.84 202.16,299.87 202.62,299.91 203.08,299.94 203.54,299.97 204.00,300.01 204.46,300.04 204.92,300.08 205.38,300.11 205.84,300.15 206.30,300.19 206.76,300.23 207.22,300.27 207.68,300.31 208.14,300.35 208.60,300.40 209.06,300.44 209.52,300.48 209.98,300.53 210.44,300.58 210.90,300.63 211.36,300.68 211.82,300.73 212.28,300.78 212.74,300.83 213.20,300.89 213.66,300.94 214.12,301.00 214.58,301.06 215.04,301.12 215.50,301.18 215.96,301.24 216.42,301.30 216.88,301.37 217.34,301.43 217.80,301.50 218.26,301.57 218.72,301.64 219.18,301.72 219.64,301.79 220.10,301.87 220.56,301.95 221.02,302.03 221.48,302.11 221.94,302.19 222.40,302.28 222.86,302.37 223.32,302.46 223.78,302.55 224.24,302.64 224.70,302.74 225.16,302.84 225.62,302.94 226.08,303.04 226.54,303.15 227.00,303.26 227.46,303.37 227.92,303.48 228.38,303.60 228.84,303.71 229.30,303.84 229.76,303.96 230.22,304.09 230.68,304.22 231.14,304.35 231.60,304.48 232.06,304.62 232.52,304.77 232.98,304.91 233.44,305.06 233.90,305.21 234.36,305.37 234.82,305.53 235.28,305.69 235.74,305.86 236.20,306.03 236.66,306.20 237.12,306.38 237.58,306.56 238.04,306.75 238.50,306.94 238.96,307.13 239.42,307.33 239.88,307.54 240.34,307.75 240.80,307.96 241.26,308.18 241.72,308.40 242.18,308.63 242.64,308.86 243.10,309.10 243.56,309.35 244.02,309.60 244.48,309.85 244.94,310.11 245.40,310.38 245.86,310.65 246.32,310.93 246.78,311.22 247.24,311.51 247.70,311.81 248.16,312.11 248.62,312.42 249.08,312.74 249.54,313.07 250.00,313.40 250.46,313.74 250.92,314.09 251.38,314.44 251.84,314.80 252.30,315.17 252.76,315.55 253.22,315.94 253.68,316.33 254.14,316.74 254.60,317.15 255.06,317.57 255.52,318.00 255.98,318.43 256.44,318.88 256.90,319.34 257.36,319.80 257.82,320.28 258.28,320.76 258.74,321.26 259.20,321.76 259.66,322.27 260.12,322.80 260.58,323.33 261.04,323.88 261.50,324.43 261.96,325.00 262.42,325.57 262.88,326.16 263.34,326.76 263.80,327.37 264.26,327.99 264.72,328.62 265.18,329.26 265.64,329.92 266.10,330.58 266.56,331.25 267.02,331.94 267.48,332.64 267.94,333.35 268.40,334.07 268.86,334.80 269.32,335.54 269.78,336.30 270.24,337.06 270.70,337.84 271.16,338.62 271.62,339.42 272.08,340.23 272.54,341.05 273.00,341.87 273.46,342.71 273.92,343.56 274.38,344.42 274.84,345.28 275.30,346.16 275.76,347.04 276.22,347.94 276.68,348.84 277.14,349.74 277.60,350.66 278.06,351.58 278.52,352.51 278.98,353.45 279.44,354.39 279.90,355.34 280.36,356.29 280.82,357.25 281.28,358.21 281.74,359.17 282.20,360.14 282.66,361.11 283.12,362.08 283.58,363.05 284.04,364.03 284.50,365.00 284.96,365.97 285.42,366.95 285.88,367.92 286.34,368.89 286.80,369.86 287.26,370.83 287.72,371.79 288.18,372.75 288.64,373.71 289.10,374.66 289.56,375.61 290.02,376.55 290.48,377.49 290.94,378.42 291.40,379.34 291.86,380.26 292.32,381.16 292.78,382.06 293.24,382.96 293.70,383.84 294.16,384.72 294.62,385.58 295.08,386.44 295.54,387.29 296.00,388.13 296.46,388.95 296.92,389.77 297.38,390.58 297.84,391.38 298.30,392.16 298.76,392.94 299.22,393.70 299.68,394.46 300.14,395.20 300.60,395.93 301.06,396.65 301.52,397.36 301.98,398.06 302.44,398.75 302.90,399.42 303.36,400.08 303.82,400.74 304.28,401.38 304.74,402.01 305.20,402.63 305.66,403.24 306.12,403.84 306.58,404.43 307.04,405.00 307.50,405.57 307.96,406.12 308.42,406.67 308.88,407.20 309.34,407.73 309.80,408.24 310.26,408.74 310.72,409.24 311.18,409.72 311.64,410.20 312.10,410.66 312.56,411.12 313.02,411.57 313.48,412.00 313.94,412.43 314.40,412.85 314.86,413.26 315.32,413.67 315.78,414.06 316.24,414.45 316.70,414.83 317.16,415.20 317.62,415.56 318.08,415.91 318.54,416.26 319.00,416.60 319.46,416.93 319.92,417.26 320.38,417.58 320.84,417.89 321.30,418.19 321.76,418.49 322.22,418.78 322.68,419.07 323.14,419.35 323.60,419.62 324.06,419.89 324.52,420.15 324.98,420.40 325.44,420.65 325.90,420.90 326.36,421.14 326.82,421.37 327.28,421.60 327.74,421.82 328.20,422.04 328.66,422.25 329.12,422.46 329.58,422.67 330.04,422.87 330.50,423.06 330.96,423.25 331.42,423.44 331.88,423.62 332.34,423.80 332.80,423.97 333.26,424.14 333.72,424.31 334.18,424.47 334.64,424.63 335.10,424.79 335.56,424.94 336.02,425.09 336.48,425.23 336.94,425.38 337.40,425.52 337.86,425.65 338.32,425.78 338.78,425.91 339.24,426.04 339.70,426.16 340.16,426.29 340.62,426.40 341.08,426.52 341.54,426.63 342.00,426.74 342.46,426.85 342.92,426.96 343.38,427.06 343.84,427.16 344.30,427.26 344.76,427.36 345.22,427.45 345.68,427.54 346.14,427.63 346.60,427.72 347.06,427.81 347.52,427.89 347.98,427.97 348.44,428.05 348.90,428.13 349.36,428.21 349.82,428.28 350.28,428.36 350.74,428.43 351.20,428.50 351.66,428.57 352.12,428.63 352.58,428.70 353.04,428.76 353.50,428.82 353.96,428.88 354.42,428.94 354.88,429.00 355.34,429.06 355.80,429.11 356.26,429.17 356.72,429.22 357.18,429.27 357.64,429.32 358.10,429.37 358.56,429.42 359.02,429.47 359.48,429.52 359.94,429.56 360.40,429.60 360.86,429.65 361.32,429.69 361.78,429.73 362.24,429.77 362.70,429.81 363.16,429.85 363.62,429.89 364.08,429.92 364.54,429.96 365.00,429.99 365.46,430.03 365.92,430.06 366.38,430.09 366.84,430.13 367.30,430.16 367.76,430.19 368.22,430.22 368.68,430.25 369.14,430.28 369.60,430.30 370.06,430.33 370.52,430.36 370.98,430.38 371.44,430.41 371.90,430.43 372.36,430.46 372.82,430.48 373.28,430.51 373.74,430.53 374.20,430.55 374.66,430.57 375.12,430.59 375.58,430.61 376.04,430.63 376.50,430.65" fill="none" stroke="#7474fa" stroke-width="1.15"/>
<path d="M283.10,135.12 l2.8,2.8 M285.90,135.12 l-2.8,2.8" stroke="#2020ff" stroke-width="0.9"/>
<path d="M283.10,363.60 l2.8,2.8 M285.90,363.60 l-2.8,2.8" stroke="#2020ff" stroke-width="0.9"/>
<rect x="192.5" y="122.5" width="184.0" height="163.0" fill="none" stroke="#9e9e9e" stroke-width="1"/>
<rect x="192.5" y="298.5" width="184.0" height="133.0" fill="none" stroke="#9e9e9e" stroke-width="1"/>
<text x="195.74" y="260.80" font-size="7.3" fill="#333" textLength="27.55" lengthAdjust="spacingAndGlyphs">G.M.: inf</text>
<text x="195.51" y="268.70" font-size="7.3" fill="#333" textLength="34.00" lengthAdjust="spacingAndGlyphs">Freq: NaN</text>
<text x="195.77" y="276.90" font-size="7.3" fill="#333" textLength="36.21" lengthAdjust="spacingAndGlyphs">Stable loop</text>
<text x="195.52" y="416.70" font-size="7.3" fill="#333" textLength="46.96" lengthAdjust="spacingAndGlyphs">P.M.: -180 deg</text>
<text x="195.51" y="424.70" font-size="7.3" fill="#333" textLength="41.64" lengthAdjust="spacingAndGlyphs">Freq: 0 rad/s</text>
<rect x="431.5" y="108.5" width="186.0" height="146.0" fill="#ffffff"/>
<path d="M431.5,108.50 h2 M617.5,108.50 h-2" stroke="#9e9e9e" stroke-width="0.8"/>
<text x="424.73" y="111.30" font-size="7.2" fill="#6a6a6a" textLength="4.00" lengthAdjust="spacingAndGlyphs">1</text>
<path d="M431.5,123.10 h2 M617.5,123.10 h-2" stroke="#9e9e9e" stroke-width="0.8"/>
<text x="418.68" y="125.90" font-size="7.2" fill="#6a6a6a" textLength="10.01" lengthAdjust="spacingAndGlyphs">0.8</text>
<path d="M431.5,137.70 h2 M617.5,137.70 h-2" stroke="#9e9e9e" stroke-width="0.8"/>
<text x="418.68" y="140.50" font-size="7.2" fill="#6a6a6a" textLength="10.01" lengthAdjust="spacingAndGlyphs">0.6</text>
<path d="M431.5,152.30 h2 M617.5,152.30 h-2" stroke="#9e9e9e" stroke-width="0.8"/>
<text x="418.61" y="155.10" font-size="7.2" fill="#6a6a6a" textLength="10.01" lengthAdjust="spacingAndGlyphs">0.4</text>
<path d="M431.5,166.90 h2 M617.5,166.90 h-2" stroke="#9e9e9e" stroke-width="0.8"/>
<text x="418.75" y="169.70" font-size="7.2" fill="#6a6a6a" textLength="10.01" lengthAdjust="spacingAndGlyphs">0.2</text>
<path d="M431.5,181.50 h2 M617.5,181.50 h-2" stroke="#9e9e9e" stroke-width="0.8"/>
<text x="424.66" y="184.30" font-size="7.2" fill="#6a6a6a" textLength="4.00" lengthAdjust="spacingAndGlyphs">0</text>
<path d="M431.5,196.10 h2 M617.5,196.10 h-2" stroke="#9e9e9e" stroke-width="0.8"/>
<text x="416.38" y="198.90" font-size="7.2" fill="#6a6a6a" textLength="12.41" lengthAdjust="spacingAndGlyphs">-0.2</text>
<path d="M431.5,210.70 h2 M617.5,210.70 h-2" stroke="#9e9e9e" stroke-width="0.8"/>
<text x="416.23" y="213.50" font-size="7.2" fill="#6a6a6a" textLength="12.41" lengthAdjust="spacingAndGlyphs">-0.4</text>
<path d="M431.5,225.30 h2 M617.5,225.30 h-2" stroke="#9e9e9e" stroke-width="0.8"/>
<text x="416.30" y="228.10" font-size="7.2" fill="#6a6a6a" textLength="12.41" lengthAdjust="spacingAndGlyphs">-0.6</text>
<path d="M431.5,239.90 h2 M617.5,239.90 h-2" stroke="#9e9e9e" stroke-width="0.8"/>
<text x="416.30" y="242.70" font-size="7.2" fill="#6a6a6a" textLength="12.41" lengthAdjust="spacingAndGlyphs">-0.8</text>
<path d="M431.5,254.50 h2 M617.5,254.50 h-2" stroke="#9e9e9e" stroke-width="0.8"/>
<text x="422.32" y="257.30" font-size="7.2" fill="#6a6a6a" textLength="6.40" lengthAdjust="spacingAndGlyphs">-1</text>
<path d="M431.50,108.5 v2 M431.50,254.5 v-2" stroke="#9e9e9e" stroke-width="0.8"/>
<text x="428.54" y="265.00" font-size="7.2" fill="#6a6a6a" textLength="6.40" lengthAdjust="spacingAndGlyphs">-4</text>
<path d="M468.70,108.5 v2 M468.70,254.5 v-2" stroke="#9e9e9e" stroke-width="0.8"/>
<text x="465.78" y="265.00" font-size="7.2" fill="#6a6a6a" textLength="6.40" lengthAdjust="spacingAndGlyphs">-3</text>
<path d="M505.90,108.5 v2 M505.90,254.5 v-2" stroke="#9e9e9e" stroke-width="0.8"/>
<text x="503.01" y="265.00" font-size="7.2" fill="#6a6a6a" textLength="6.40" lengthAdjust="spacingAndGlyphs">-2</text>
<path d="M543.10,108.5 v2 M543.10,254.5 v-2" stroke="#9e9e9e" stroke-width="0.8"/>
<text x="540.20" y="265.00" font-size="7.2" fill="#6a6a6a" textLength="6.40" lengthAdjust="spacingAndGlyphs">-1</text>
<path d="M580.30,108.5 v2 M580.30,254.5 v-2" stroke="#9e9e9e" stroke-width="0.8"/>
<text x="578.58" y="265.00" font-size="7.2" fill="#6a6a6a" textLength="4.00" lengthAdjust="spacingAndGlyphs">0</text>
<path d="M617.50,108.5 v2 M617.50,254.5 v-2" stroke="#9e9e9e" stroke-width="0.8"/>
<text x="615.69" y="265.00" font-size="7.2" fill="#6a6a6a" textLength="4.00" lengthAdjust="spacingAndGlyphs">1</text>
<line x1="580.30" y1="108.5" x2="580.30" y2="254.5" stroke="#b0b0b0" stroke-width="0.8" stroke-dasharray="1.2 1.4"/>
<line x1="431.5" y1="181.50" x2="617.5" y2="181.50" stroke="#c4c4c4" stroke-width="1"/>
<line x1="431.5" y1="181.50" x2="543.10" y2="181.50" stroke="#8080ff" stroke-width="1.3"/>
<circle cx="505.90" cy="181.50" r="1.9" fill="#ff00cc"/>
<path d="M541.60,180.00 l3,3 M544.60,180.00 l-3,3" stroke="#3030ff" stroke-width="1"/>
<rect x="431.5" y="108.5" width="186.0" height="146.0" fill="none" stroke="#9e9e9e" stroke-width="1"/>
<text x="507.85" y="274.75" font-size="8.0" fill="#5a5a5a" textLength="33.67" lengthAdjust="spacingAndGlyphs">Real Axis</text>
<text transform="translate(413.00,198.80) rotate(-90)" x="-0.73" y="0" font-size="8.0" fill="#5a5a5a" textLength="35.22" lengthAdjust="spacingAndGlyphs">Imag Axis</text>
<text x="452.59" y="104.75" font-size="7.9" fill="#4a4a4a" font-weight="bold" textLength="143.89" lengthAdjust="spacingAndGlyphs">Root Locus Editor for LoopTransfer_C</text>
<rect x="438" y="315" width="179.70000000000005" height="138.2" fill="#ffffff"/>
<rect x="438" y="433.46" width="59.90" height="19.74" fill="#fbfadc"/>
<rect x="497.90" y="354.49" width="59.90" height="98.71" fill="#fbfadc"/>
<rect x="557.80" y="315" width="59.90" height="138.20" fill="#fbfadc"/>
<rect x="438" y="315" width="179.70000000000005" height="138.2" fill="none" stroke="#9e9e9e" stroke-width="1"/>
<path d="M438,315.00 h2 M617.7,315.00 h-2" stroke="#9e9e9e" stroke-width="0.8"/>
<text x="425.55" y="317.00" font-size="7.2" fill="#6a6a6a" textLength="10.01" lengthAdjust="spacingAndGlyphs">1.2</text>
<path d="M438,334.74 h2 M617.7,334.74 h-2" stroke="#9e9e9e" stroke-width="0.8"/>
<text x="431.53" y="337.64" font-size="7.2" fill="#6a6a6a" textLength="4.00" lengthAdjust="spacingAndGlyphs">1</text>
<path d="M438,354.49 h2 M617.7,354.49 h-2" stroke="#9e9e9e" stroke-width="0.8"/>
<text x="425.48" y="357.39" font-size="7.2" fill="#6a6a6a" textLength="10.01" lengthAdjust="spacingAndGlyphs">0.8</text>
<path d="M438,374.23 h2 M617.7,374.23 h-2" stroke="#9e9e9e" stroke-width="0.8"/>
<text x="425.48" y="377.13" font-size="7.2" fill="#6a6a6a" textLength="10.01" lengthAdjust="spacingAndGlyphs">0.6</text>
<path d="M438,393.97 h2 M617.7,393.97 h-2" stroke="#9e9e9e" stroke-width="0.8"/>
<text x="425.41" y="396.87" font-size="7.2" fill="#6a6a6a" textLength="10.01" lengthAdjust="spacingAndGlyphs">0.4</text>
<path d="M438,413.71 h2 M617.7,413.71 h-2" stroke="#9e9e9e" stroke-width="0.8"/>
<text x="425.55" y="416.61" font-size="7.2" fill="#6a6a6a" textLength="10.01" lengthAdjust="spacingAndGlyphs">0.2</text>
<path d="M438,433.46 h2 M617.7,433.46 h-2" stroke="#9e9e9e" stroke-width="0.8"/>
<text x="431.46" y="436.36" font-size="7.2" fill="#6a6a6a" textLength="4.00" lengthAdjust="spacingAndGlyphs">0</text>
<path d="M438,453.20 h2 M617.7,453.20 h-2" stroke="#9e9e9e" stroke-width="0.8"/>
<text x="423.18" y="456.10" font-size="7.2" fill="#6a6a6a" textLength="12.41" lengthAdjust="spacingAndGlyphs">-0.2</text>
<path d="M438.00,315 v2 M438.00,453.2 v-2" stroke="#9e9e9e" stroke-width="0.8"/>
<text x="436.28" y="463.50" font-size="7.2" fill="#6a6a6a" textLength="4.00" lengthAdjust="spacingAndGlyphs">0</text>
<path d="M467.95,315 v2 M467.95,453.2 v-2" stroke="#9e9e9e" stroke-width="0.8"/>
<text x="463.25" y="463.50" font-size="7.2" fill="#6a6a6a" textLength="10.01" lengthAdjust="spacingAndGlyphs">0.5</text>
<path d="M497.90,315 v2 M497.90,453.2 v-2" stroke="#9e9e9e" stroke-width="0.8"/>
<text x="496.09" y="463.50" font-size="7.2" fill="#6a6a6a" textLength="4.00" lengthAdjust="spacingAndGlyphs">1</text>
<path d="M527.85,315 v2 M527.85,453.2 v-2" stroke="#9e9e9e" stroke-width="0.8"/>
<text x="523.02" y="463.50" font-size="7.2" fill="#6a6a6a" textLength="10.01" lengthAdjust="spacingAndGlyphs">1.5</text>
<path d="M557.80,315 v2 M557.80,453.2 v-2" stroke="#9e9e9e" stroke-width="0.8"/>
<text x="556.10" y="463.50" font-size="7.2" fill="#6a6a6a" textLength="4.00" lengthAdjust="spacingAndGlyphs">2</text>
<path d="M587.75,315 v2 M587.75,453.2 v-2" stroke="#9e9e9e" stroke-width="0.8"/>
<text x="583.01" y="463.50" font-size="7.2" fill="#6a6a6a" textLength="10.01" lengthAdjust="spacingAndGlyphs">2.5</text>
<path d="M617.70,315 v2 M617.70,453.2 v-2" stroke="#9e9e9e" stroke-width="0.8"/>
<text x="616.00" y="463.50" font-size="7.2" fill="#6a6a6a" textLength="4.00" lengthAdjust="spacingAndGlyphs">3</text>
<rect x="438.00" y="314.00" width="119.80" height="2.0" fill="#111"/>
<rect x="438.00" y="432.46" width="59.90" height="2.0" fill="#111"/>
<rect x="497.90" y="353.49" width="59.90" height="2.0" fill="#111"/>
<rect x="557.80" y="333.04" width="59.90" height="3.4" fill="#111"/>
<rect x="557.80" y="334.44" width="59.90" height="0.6" fill="#505050"/>
<polyline points="438.00,433.46 438.60,432.48 439.20,431.52 439.80,430.58 440.40,429.66 441.00,428.76 441.59,427.88 442.19,427.01 442.79,426.16 443.39,425.33 443.99,424.51 444.59,423.71 445.19,422.93 445.79,422.16 446.39,421.40 446.99,420.66 447.58,419.94 448.18,419.23 448.78,418.54 449.38,417.85 449.98,417.19 450.58,416.53 451.18,415.89 451.78,415.26 452.38,414.64 452.98,414.04 453.57,413.44 454.17,412.86 454.77,412.29 455.37,411.73 455.97,411.19 456.57,410.65 457.17,410.13 457.77,409.61 458.37,409.11 458.97,408.61 459.56,408.12 460.16,407.65 460.76,407.18 461.36,406.73 461.96,406.28 462.56,405.84 463.16,405.41 463.76,404.99 464.36,404.57 464.95,404.17 465.55,403.77 466.15,403.38 466.75,403.00 467.35,402.62 467.95,402.26 468.55,401.90 469.15,401.55 469.75,401.20 470.35,400.86 470.94,400.53 471.54,400.20 472.14,399.89 472.74,399.57 473.34,399.27 473.94,398.97 474.54,398.67 475.14,398.38 475.74,398.10 476.34,397.82 476.94,397.55 477.53,397.29 478.13,397.02 478.73,396.77 479.33,396.52 479.93,396.27 480.53,396.03 481.13,395.79 481.73,395.56 482.33,395.34 482.93,395.11 483.52,394.89 484.12,394.68 484.72,394.47 485.32,394.27 485.92,394.07 486.52,393.87 487.12,393.67 487.72,393.48 488.32,393.30 488.92,393.12 489.51,392.94 490.11,392.76 490.71,392.59 491.31,392.42 491.91,392.26 492.51,392.10 493.11,391.94 493.71,391.78 494.31,391.63 494.91,391.48 495.50,391.34 496.10,391.19 496.70,391.05 497.30,390.91 497.90,390.78 498.50,390.65 499.10,390.52 499.70,390.39 500.30,390.27 500.90,390.14 501.49,390.02 502.09,389.91 502.69,389.79 503.29,389.68 503.89,389.57 504.49,389.46 505.09,389.35 505.69,389.25 506.29,389.15 506.88,389.05 507.48,388.95 508.08,388.85 508.68,388.76 509.28,388.67 509.88,388.58 510.48,388.49 511.08,388.40 511.68,388.32 512.28,388.23 512.88,388.15 513.47,388.07 514.07,387.99 514.67,387.92 515.27,387.84 515.87,387.77 516.47,387.69 517.07,387.62 517.67,387.55 518.27,387.48 518.87,387.42 519.46,387.35 520.06,387.29 520.66,387.22 521.26,387.16 521.86,387.10 522.46,387.04 523.06,386.98 523.66,386.93 524.26,386.87 524.86,386.82 525.45,386.76 526.05,386.71 526.65,386.66 527.25,386.61 527.85,386.56 528.45,386.51 529.05,386.46 529.65,386.41 530.25,386.37 530.85,386.32 531.44,386.28 532.04,386.24 532.64,386.19 533.24,386.15 533.84,386.11 534.44,386.07 535.04,386.03 535.64,385.99 536.24,385.96 536.84,385.92 537.43,385.88 538.03,385.85 538.63,385.81 539.23,385.78 539.83,385.75 540.43,385.71 541.03,385.68 541.63,385.65 542.23,385.62 542.83,385.59 543.42,385.56 544.02,385.53 544.62,385.50 545.22,385.48 545.82,385.45 546.42,385.42 547.02,385.40 547.62,385.37 548.22,385.34 548.82,385.32 549.41,385.30 550.01,385.27 550.61,385.25 551.21,385.23 551.81,385.20 552.41,385.18 553.01,385.16 553.61,385.14 554.21,385.12 554.81,385.10 555.40,385.08 556.00,385.06 556.60,385.04 557.20,385.02 557.80,385.00 558.40,384.99 559.00,384.97 559.60,384.95 560.20,384.93 560.80,384.92 561.39,384.90 561.99,384.89 562.59,384.87 563.19,384.86 563.79,384.84 564.39,384.83 564.99,384.81 565.59,384.80 566.19,384.78 566.79,384.77 567.38,384.76 567.98,384.74 568.58,384.73 569.18,384.72 569.78,384.71 570.38,384.69 570.98,384.68 571.58,384.67 572.18,384.66 572.78,384.65 573.37,384.64 573.97,384.63 574.57,384.62 575.17,384.61 575.77,384.60 576.37,384.59 576.97,384.58 577.57,384.57 578.17,384.56 578.77,384.55 579.36,384.54 579.96,384.53 580.56,384.52 581.16,384.51 581.76,384.51 582.36,384.50 582.96,384.49 583.56,384.48 584.16,384.47 584.76,384.47 585.35,384.46 585.95,384.45 586.55,384.45 587.15,384.44 587.75,384.43 588.35,384.43 588.95,384.42 589.55,384.41 590.15,384.41 590.75,384.40 591.34,384.39 591.94,384.39 592.54,384.38 593.14,384.38 593.74,384.37 594.34,384.37 594.94,384.36 595.54,384.36 596.14,384.35 596.74,384.35 597.33,384.34 597.93,384.34 598.53,384.33 599.13,384.33 599.73,384.32 600.33,384.32 600.93,384.31 601.53,384.31 602.13,384.31 602.73,384.30 603.32,384.30 603.92,384.29 604.52,384.29 605.12,384.29 605.72,384.28 606.32,384.28 606.92,384.28 607.52,384.27 608.12,384.27 608.72,384.27 609.31,384.26 609.91,384.26 610.51,384.26 611.11,384.25 611.71,384.25 612.31,384.25 612.91,384.24 613.51,384.24 614.11,384.24 614.71,384.24 615.30,384.23 615.90,384.23 616.50,384.23 617.10,384.22 617.70,384.22" fill="none" stroke="#7474f0" stroke-width="1"/>
<text x="498.76" y="302.00" font-size="7.6" fill="#222" font-weight="bold" textLength="57.11" lengthAdjust="spacingAndGlyphs">Step Response</text>
<text x="506.32" y="311.40" font-size="7.2" fill="#8a8a8a" textLength="42.44" lengthAdjust="spacingAndGlyphs">From: r  To: y</text>
<text x="501.09" y="471.90" font-size="8.0" fill="#333" textLength="54.41" lengthAdjust="spacingAndGlyphs">Time (seconds)</text>
<text transform="translate(420.80,402.20) rotate(-90)" x="-0.00" y="0" font-size="8.0" fill="#333" textLength="35.27" lengthAdjust="spacingAndGlyphs">Amplitude</text></svg></body></html>
